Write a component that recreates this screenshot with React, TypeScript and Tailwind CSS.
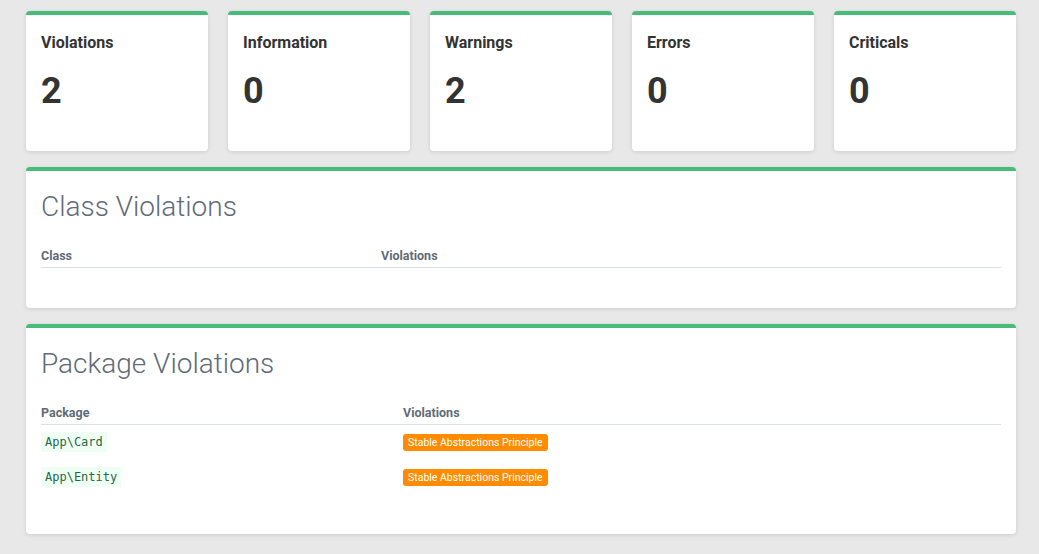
import React from "react";

const stats = [
  { label: "Violations", value: 2 },
  { label: "Information", value: 0 },
  { label: "Warnings", value: 2 },
  { label: "Errors", value: 0 },
  { label: "Criticals", value: 0 },
];

const packages = ["App\\Card", "App\\Entity"];

const StatCard: React.FC<{ label: string; value: number }> = ({ label, value }) => (
  <div className="bg-white rounded border-t-4 border-[#48bb78] h-[140px] px-[15px] pt-[16px] shadow-[0_1px_4px_rgba(0,0,0,0.12)]">
    <div className="text-base leading-6 font-bold text-[#333]">{label}</div>
    <div className="mt-[16px] text-4xl leading-10 font-bold text-[#333]">{value}</div>
  </div>
);

const Panel: React.FC<{ title: string; className: string; children: React.ReactNode }> = ({
  title,
  className,
  children,
}) => (
  <div
    className={`bg-white rounded border-t-4 border-[#48bb78] px-[15px] pt-[18px] shadow-[0_1px_4px_rgba(0,0,0,0.12)] ${className}`}
  >
    <h2 className="text-[28px] leading-9 font-light text-[#5f6b77]">{title}</h2>
    {children}
  </div>
);

const App: React.FC = () => {
  return (
    <div className="min-h-[554px] bg-[#e8e8e8] pl-[26px] pr-[23px] pt-[11px] font-['Roboto',sans-serif]">
      <div className="grid grid-cols-5 gap-5">
        {stats.map((s) => (
          <StatCard key={s.label} label={s.label} value={s.value} />
        ))}
      </div>

      <div className="mt-4">
        <Panel title="Class Violations" className="pb-[40px]">
          <table className="w-full mt-[24px] border-collapse">
            <thead>
              <tr className="border-b border-[#dae1e7] text-left text-[12.5px] leading-[14px] font-bold text-[#5f6b77]">
                <th className="w-[340px] pb-1">Class</th>
                <th className="pb-1">Violations</th>
              </tr>
            </thead>
            <tbody />
          </table>
        </Panel>
      </div>

      <div className="mt-4">
        <Panel title="Package Violations" className="pb-[39px]">
          <table className="w-full mt-[24px] border-collapse">
            <thead>
              <tr className="border-b border-[#dae1e7] text-left text-[12.5px] leading-[14px] font-bold text-[#5f6b77]">
                <th className="w-[362px] pb-1">Package</th>
                <th className="pb-1">Violations</th>
              </tr>
            </thead>
            <tbody>
              {packages.map((p) => (
                <tr key={p} className="h-[35px]">
                  <td className="align-middle pb-[2px]">
                    <code className="inline-block bg-[#f0fff4] text-[#276749] px-1 leading-5 text-xs font-['DejaVu_Sans_Mono',monospace]">
                      {p}
                    </code>
                  </td>
                  <td className="align-middle pb-[2px]">
                    <span className="inline-block rounded-[3px] bg-[#ff8c00] text-white text-[10.5px] leading-[17px] px-[5px]">
                      Stable Abstractions Principle
                    </span>
                  </td>
                </tr>
              ))}
            </tbody>
          </table>
        </Panel>
      </div>
    </div>
  );
};

export default App;
